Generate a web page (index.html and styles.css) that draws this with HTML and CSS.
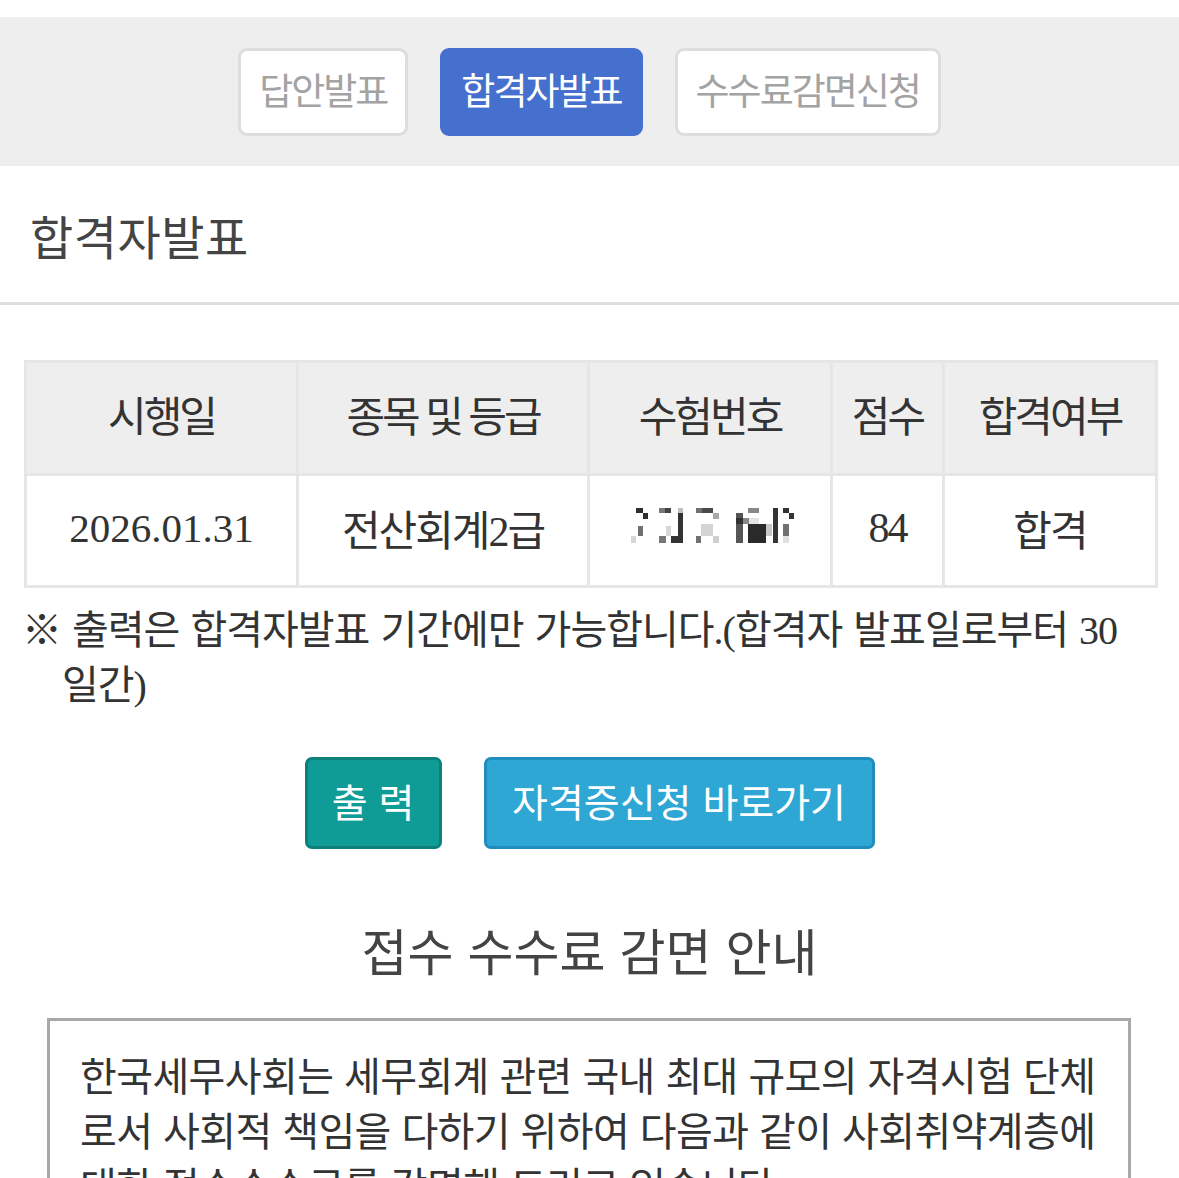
FILE: index.html
```html
<!DOCTYPE html>
<html lang="ko">
<head>
<meta charset="utf-8">
<title>합격자발표</title>
<link rel="stylesheet" href="styles.css">
</head>
<body>
<div class="tabs-band">
  <nav class="tabs">
    <a class="tab">답안발표</a>
    <a class="tab tab-active">합격자발표</a>
    <a class="tab">수수료감면신청</a>
  </nav>
</div>

<header class="page-title">
  <h1>합격자발표</h1>
</header>

<main class="content">
  <table class="result">
    <colgroup>
      <col class="c1"><col class="c2"><col class="c3"><col class="c4"><col class="c5">
    </colgroup>
    <thead>
      <tr>
        <th>시행일</th>
        <th>종목 및 등급</th>
        <th>수험번호</th>
        <th>점수</th>
        <th>합격여부</th>
      </tr>
    </thead>
    <tbody>
      <tr>
        <td>2026.01.31</td>
        <td>전산회계2급</td>
        <td class="blur-cell">
          <svg class="blur" width="170" height="44" viewBox="624 498 170 44" aria-hidden="true">
            <rect x="635" y="502" width="7" height="5" fill="#2e2e2e"/>
            <rect x="642" y="507" width="5" height="6" fill="#2e2e2e"/>
            <rect x="637" y="520" width="5" height="10" fill="#707070"/>
            <rect x="630" y="530" width="5" height="7" fill="#d6d6d6"/>
            <rect x="658" y="502" width="6" height="5" fill="#777"/>
            <rect x="664" y="502" width="6" height="5" fill="#444"/>
            <rect x="677" y="502" width="5" height="5" fill="#c0c0c0"/>
            <rect x="677" y="507" width="5" height="30" fill="#333"/>
            <rect x="665" y="520" width="5" height="10" fill="#d6d6d6"/>
            <rect x="658" y="530" width="7" height="7" fill="#777"/>
            <rect x="670" y="530" width="7" height="7" fill="#333"/>
            <rect x="695" y="502" width="6" height="5" fill="#707070"/>
            <rect x="701" y="502" width="11" height="5" fill="#4a4a4a"/>
            <rect x="712" y="507" width="6" height="6" fill="#a8a8a8"/>
            <rect x="700" y="518" width="12" height="12" fill="#d4d4d4"/>
            <rect x="695" y="530" width="5" height="7" fill="#707070"/>
            <rect x="712" y="530" width="6" height="7" fill="#cfcfcf"/>
            <rect x="735" y="507" width="7" height="30" fill="#555"/>
            <rect x="735" y="512" width="7" height="6" fill="#333"/>
            <rect x="747" y="502" width="11" height="5" fill="#888"/>
            <rect x="742" y="512" width="6" height="6" fill="#888"/>
            <rect x="748" y="512" width="10" height="6" fill="#e4e4e4"/>
            <rect x="747" y="518" width="18" height="19" fill="#2a2a2a"/>
            <rect x="765" y="518" width="6" height="12" fill="#c8c8c8"/>
            <rect x="772" y="502" width="5" height="35" fill="#333"/>
            <rect x="782" y="502" width="6" height="5" fill="#333"/>
            <rect x="788" y="507" width="5" height="6" fill="#333"/>
            <rect x="782" y="518" width="6" height="12" fill="#707070"/>
            <rect x="782" y="530" width="6" height="7" fill="#e0e0e0"/>
          </svg>
        </td>
        <td>84</td>
        <td>합격</td>
      </tr>
    </tbody>
  </table>

  <p class="note">※ 출력은 합격자발표 기간에만 가능합니다.(합격자 발표일로부터 30일간)</p>

  <div class="actions">
    <a class="btn btn-print">출 력</a>
    <a class="btn btn-apply">자격증신청 바로가기</a>
  </div>

  <h2 class="section-title">접수 수수료 감면 안내</h2>

  <div class="info-box">
    <p>한국세무사회는 세무회계 관련 국내 최대 규모의 자격시험 단체로서 사회적 책임을 다하기 위하여 다음과 같이 사회취약계층에 대한 접수수수료를 감면해 드리고 있습니다.</p>
  </div>
</main>
</body>
</html>
```

FILE: styles.css
```css
html, body {
  margin: 0;
  padding: 0;
  background: #ffffff;
}

body {
  font-family: "Liberation Serif", "Noto Sans CJK KR", serif;
  color: #333333;
  width: 1179px;
  overflow: hidden;
}

/* ---------- top tab band ---------- */
.tabs-band {
  margin-top: 17px;
  background: #eeeeee;
  padding: 31px 0 30px;
}

.tabs {
  display: flex;
  justify-content: center;
  gap: 32px;
}

.tab {
  display: flex;
  align-items: center;
  justify-content: center;
  box-sizing: border-box;
  height: 88px;
  padding: 0 18px 6px;
  border: 3px solid #dddddd;
  border-radius: 9px;
  background: #ffffff;
  color: #a3a3a3;
  font-family: "Noto Sans CJK KR", sans-serif;
  font-size: 37px;
  letter-spacing: -2px;
  text-decoration: none;
}

.tab-active {
  background: #4670cd;
  border-color: #4670cd;
  color: #ffffff;
}

/* ---------- page title ---------- */
.page-title {
  height: 136px;
  display: flex;
  align-items: center;
  padding-left: 30px;
  border-bottom: 3px solid #dedede;
}

.page-title h1 {
  margin: 0;
  font-family: "Noto Sans CJK KR", sans-serif;
  font-weight: normal;
  font-size: 47px;
  letter-spacing: 0.5px;
  color: #444444;
  line-height: 1;
}

/* ---------- content ---------- */
.content {
  padding: 0 24px;
}

.result {
  margin-top: 55px;
  width: 1131px;
  border-collapse: collapse;
  table-layout: fixed;
  border: 3px solid #e6e6e6;
}

.c1 { width: 272px; }
.c2 { width: 291px; }
.c3 { width: 243px; }
.c4 { width: 112px; }
.c5 { width: 213px; }

.result th,
.result td {
  border: 3px solid #e6e6e6;
  text-align: center;
  vertical-align: middle;
  font-weight: normal;
  color: #333333;
}

.result th {
  height: 100px;
  padding: 0 0 10px;
  background: #eeeeee;
  font-size: 42px;
  letter-spacing: -3px;
}

.result td {
  height: 103px;
  padding: 0 0 6px;
  background: #ffffff;
  font-size: 42px;
  letter-spacing: -2px;
}

.result td:first-child {
  letter-spacing: 0;
  font-size: 41px;
}

.blur-cell {
  line-height: 0;
}

.blur {
  display: inline-block;
  vertical-align: middle;
  margin-top: -4px;
}

.note {
  margin: 15px 0 0;
  padding: 0 20px 0 38px;
  text-indent: -40px;
  font-size: 40px;
  letter-spacing: -1px;
  word-spacing: 2px;
  line-height: 55px;
  color: #333333;
}

/* ---------- action buttons ---------- */
.actions {
  display: flex;
  justify-content: center;
  gap: 42px;
  margin-top: 44px;
}

.btn {
  display: flex;
  align-items: center;
  justify-content: center;
  box-sizing: border-box;
  height: 92px;
  padding-bottom: 6px;
  border: 3px solid;
  border-radius: 7px;
  color: #ffffff;
  font-family: "Noto Sans CJK KR", sans-serif;
  font-size: 39px;
  letter-spacing: 0;
  text-decoration: none;
}

.btn-print {
  width: 137px;
  background: #0f9c97;
  border-color: #0d807c;
}

.btn-apply {
  width: 391px;
  background: #2ea7d5;
  border-color: #1f8dbd;
}

/* ---------- fee info ---------- */
.section-title {
  margin: 70px 0 0;
  text-align: center;
  font-family: "Noto Sans CJK KR", sans-serif;
  font-weight: normal;
  font-size: 50px;
  letter-spacing: 0;
  line-height: 60px;
  color: #444444;
}

.info-box {
  margin: 39px 24px 0 23px;
  border: 3px solid #a8a8a8;
  padding: 26px 30px 20px 30px;
}

.info-box p {
  margin: 0;
  font-family: "Noto Sans CJK KR", sans-serif;
  font-size: 40px;
  letter-spacing: -0.6px;
  line-height: 55px;
  color: #333333;
}
```
